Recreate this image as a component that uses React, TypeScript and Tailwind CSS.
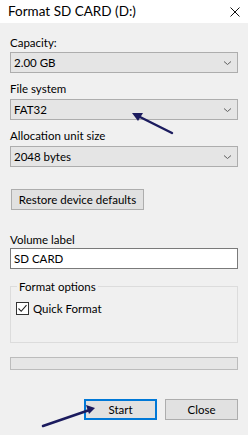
import React from 'react';

const FONT = { fontFamily: 'Lato, "Noto Sans", sans-serif' };

function Chevron() {
  return (
    <svg width="9" height="6" viewBox="0 0 9 6" className="shrink-0">
      <path d="M1 1.5 L4.5 4.5 L8 1.5" fill="none" stroke="#606060" strokeWidth="1" />
    </svg>
  );
}

function Combo({ value }: { value: string }) {
  return (
    <div className="flex h-[21px] items-center justify-between border border-[#adadad] bg-[#e5e5e5] pl-[3px] pr-[5px] text-[11.5px] leading-none text-black">
      <span>{value}</span>
      <Chevron />
    </div>
  );
}

function Label({ text, className }: { text: string; className: string }) {
  return <div className={`h-[15px] text-[11.5px] leading-[15px] text-black ${className}`}>{text}</div>;
}

function Arrows() {
  return (
    <svg className="pointer-events-none absolute left-0 top-0" width="248" height="435" viewBox="0 0 248 435">
      <line x1="172" y1="133" x2="139" y2="116.5" stroke="#1b1b5e" strokeWidth="2.5" strokeLinecap="round" />
      <polygon points="132,113 143,113 138,121" fill="#1b1b5e" />
      <line x1="43" y1="426" x2="88" y2="410.5" stroke="#1b1b5e" strokeWidth="2.5" strokeLinecap="round" />
      <polygon points="95,408 86,405 89,414" fill="#1b1b5e" />
    </svg>
  );
}

export default function App() {
  return (
    <div className="relative h-[435px] w-[248px] overflow-hidden bg-[#f0f0f0]" style={FONT}>
      {/* title bar */}
      <div className="flex h-[23px] items-center justify-between bg-white pl-[8px] pr-[8px]">
        <span className="text-[13.5px] text-black">Format SD CARD (D:)</span>
        <svg width="10" height="10" viewBox="0 0 10 10">
          <path d="M0.5 0.5 L9.5 9.5 M9.5 0.5 L0.5 9.5" stroke="#111" strokeWidth="1" />
        </svg>
      </div>

      <div className="px-[10px]">
        <Label text="Capacity:" className="mt-[12px]" />
        <div className="mt-[2px]">
          <Combo value="2.00 GB" />
        </div>

        <Label text="File system" className="mt-[8px]" />
        <div className="mt-[3px]">
          <Combo value="FAT32" />
        </div>

        <Label text="Allocation unit size" className="mt-[8px]" />
        <div className="mt-[3px]">
          <Combo value="2048 bytes" />
        </div>

        <button className="ml-[1px] mt-[22px] flex h-[21px] w-[133px] items-center justify-center border border-[#adadad] bg-[#e1e1e1] text-[11.5px] leading-none text-black">
          Restore device defaults
        </button>

        <Label text="Volume label" className="mt-[22px]" />
        <div className="mt-[1px] flex h-[21px] items-center border border-[#7a7a7a] bg-white pl-[3px] text-[11.5px] leading-none text-black">
          SD CARD
        </div>

        <fieldset className="mt-[10px] h-[64px] border border-[#dcdcdc] px-[5px]">
          <legend className="ml-[1px] px-[2px] text-[11.5px] leading-[15px] text-black">Format options</legend>
          <div className="mt-[7px] flex items-center gap-[4px]">
            <div className="flex h-[13px] w-[13px] items-center justify-center border border-[#333] bg-white">
              <svg width="11" height="11" viewBox="0 0 11 11">
                <path d="M1.5 5.5 L4.2 8.3 L9.5 2.2" fill="none" stroke="#222" strokeWidth="1.1" />
              </svg>
            </div>
            <span className="text-[11.5px] leading-[15px] text-black">Quick Format</span>
          </div>
        </fieldset>

        <div className="mt-[14px] h-[13px] border border-[#bcbcbc] bg-[#e6e6e6]" />

        <div className="mt-[29px] flex justify-end gap-[8px]">
          <button className="flex h-[21px] w-[73px] items-center justify-center border-2 border-[#0078d7] bg-[#e1e1e1] text-[11.5px] leading-none text-black">
            Start
          </button>
          <button className="flex h-[21px] w-[73px] items-center justify-center border border-[#adadad] bg-[#e1e1e1] text-[11.5px] leading-none text-black">
            Close
          </button>
        </div>
      </div>

      <Arrows />
    </div>
  );
}
